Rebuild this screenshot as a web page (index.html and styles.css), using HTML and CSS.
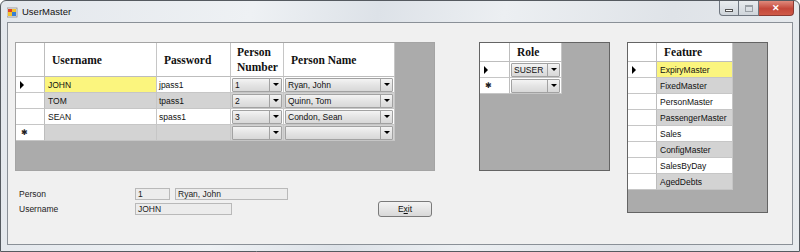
FILE: index.html
```html
<!DOCTYPE html>
<html lang="en">
<head>
    <meta charset="UTF-8" />
    <title>UserMaster</title>
    <link rel="stylesheet" href="styles.css">
</head>
<body>
    <div class="window">
        <div class="titlebar">
            <svg class="app-icon" width="11" height="11" viewBox="0 0 11 11">
                <rect x="0" y="1" width="10" height="9" fill="#f4f4f4" stroke="#8a8a8a" stroke-width="0.8"/>
                <rect x="1" y="2" width="4" height="3" fill="#e0412a"/>
                <rect x="5" y="2" width="4" height="3" fill="#f2c22c"/>
                <rect x="1" y="5" width="4" height="4" fill="#f2c22c"/>
                <rect x="5" y="5" width="4" height="4" fill="#3a7fd4"/>
            </svg>
            <span class="title">UserMaster</span>
            <div class="caption">
                <span class="cbtn min"><i></i></span>
                <span class="cbtn max"><i></i></span>
                <span class="cbtn close">&#10005;</span>
            </div>
        </div>
        <div class="client">
            <div class="left">
                <div class="top">
                    <div class="grid main">
                        <div class="row hdr">
                            <div class="c rh"></div>
                            <div class="c w-user">Username</div>
                            <div class="c w-pass">Password</div>
                            <div class="c w-pnum two">Person<br>Number</div>
                            <div class="c w-pname">Person Name</div>
                        </div>
                        <div class="row">
                            <div class="c rh"><span class="cur"></span></div>
                            <div class="c w-user yellow">JOHN</div>
                            <div class="c w-pass">jpass1</div>
                            <div class="c w-pnum box"><div class="combo"><span>1</span><b><i></i></b></div></div>
                            <div class="c w-pname box"><div class="combo"><span>Ryan, John</span><b><i></i></b></div></div>
                        </div>
                        <div class="row alt">
                            <div class="c rh"></div>
                            <div class="c w-user">TOM</div>
                            <div class="c w-pass">tpass1</div>
                            <div class="c w-pnum box"><div class="combo"><span>2</span><b><i></i></b></div></div>
                            <div class="c w-pname box"><div class="combo"><span>Quinn, Tom</span><b><i></i></b></div></div>
                        </div>
                        <div class="row">
                            <div class="c rh"></div>
                            <div class="c w-user">SEAN</div>
                            <div class="c w-pass">spass1</div>
                            <div class="c w-pnum box"><div class="combo"><span>3</span><b><i></i></b></div></div>
                            <div class="c w-pname box"><div class="combo"><span>Condon, Sean</span><b><i></i></b></div></div>
                        </div>
                        <div class="row alt">
                            <div class="c rh"><span class="star">&#10033;</span></div>
                            <div class="c w-user"></div>
                            <div class="c w-pass"></div>
                            <div class="c w-pnum box"><div class="combo"><span></span><b><i></i></b></div></div>
                            <div class="c w-pname box"><div class="combo"><span></span><b><i></i></b></div></div>
                        </div>
                    </div>

                    <div class="grid role">
                        <div class="row hdr small">
                            <div class="c rh2"></div>
                            <div class="c w-role">Role</div>
                        </div>
                        <div class="row">
                            <div class="c rh2"><span class="cur"></span></div>
                            <div class="c w-role box"><div class="combo"><span>SUSER</span><b><i></i></b></div></div>
                        </div>
                        <div class="row">
                            <div class="c rh2"><span class="star">&#10033;</span></div>
                            <div class="c w-role box"><div class="combo"><span></span><b><i></i></b></div></div>
                        </div>
                    </div>
                </div>

                <div class="form">
                    <div class="fields">
                        <span class="lbl">Person</span>
                        <div class="boxes">
                            <span class="tb tb-num">1</span>
                            <span class="tb tb-name">Ryan, John</span>
                        </div>
                        <span class="lbl">Username</span>
                        <div class="boxes">
                            <span class="tb tb-user">JOHN</span>
                        </div>
                    </div>
                    <button class="exit">E<u>x</u>it</button>
                </div>
            </div>

            <div class="grid feature">
                <div class="row hdr small">
                    <div class="c rh"></div>
                    <div class="c w-feat">Feature</div>
                </div>
                <div class="row"><div class="c rh"><span class="cur"></span></div><div class="c w-feat yellow">ExpiryMaster</div></div>
                <div class="row alt"><div class="c rh"></div><div class="c w-feat">FixedMaster</div></div>
                <div class="row"><div class="c rh"></div><div class="c w-feat">PersonMaster</div></div>
                <div class="row alt"><div class="c rh"></div><div class="c w-feat">PassengerMaster</div></div>
                <div class="row"><div class="c rh"></div><div class="c w-feat">Sales</div></div>
                <div class="row alt"><div class="c rh"></div><div class="c w-feat">ConfigMaster</div></div>
                <div class="row"><div class="c rh"></div><div class="c w-feat">SalesByDay</div></div>
                <div class="row alt"><div class="c rh"></div><div class="c w-feat">AgedDebts</div></div>
            </div>
        </div>
    </div>
</body>
</html>
```

FILE: styles.css
```css
html, body {
    margin: 0;
    padding: 0;
    background: #ffffff;
}
* {
    box-sizing: border-box;
}
.window {
    width: 800px;
    height: 252px;
    border: 1px solid #555a60;
    border-radius: 6px 6px 0 0;
    background: linear-gradient(100deg, #e3e7ec 0%, #eef1f4 30%, #dde2e8 45%, #eceff2 60%, #dfe3e8 80%, #e8ebee 100%);
    display: flex;
    flex-direction: column;
    font-family: "Liberation Sans", Arial, sans-serif;
}
.titlebar {
    height: 21px;
    display: flex;
    align-items: flex-start;
    padding-left: 6px;
    padding-right: 5px;
}
.app-icon {
    margin-top: 6px;
}
.title {
    margin-left: 4px;
    margin-top: 5px;
    font-size: 9.5px;
    color: #111;
}
.caption {
    margin-left: auto;
    display: flex;
    height: 15px;
}
.cbtn {
    display: flex;
    align-items: center;
    justify-content: center;
    height: 15px;
    border: 1px solid #6f7680;
    border-top: none;
    background: linear-gradient(#e9ecef, #cfd5db);
}
.cbtn.min {
    width: 20px;
    border-radius: 0 0 0 4px;
}
.cbtn.min i {
    display: block;
    width: 8px;
    height: 3px;
    margin-top: 4px;
    background: #fff;
    border: 1px solid #555;
}
.cbtn.max {
    width: 20px;
    border-left: none;
}
.cbtn.max i {
    display: block;
    width: 8px;
    height: 7px;
    border: 1px solid #9aa0a6;
    border-top-width: 2px;
}
.cbtn.close {
    width: 35px;
    border-left: none;
    border-color: #8a3a33;
    border-radius: 0 0 4px 0;
    background: linear-gradient(#e08a7c, #c4473a 55%, #cf5a48);
    color: #fff;
    font-size: 9px;
    font-weight: bold;
}
.client {
    flex: 1;
    margin: 0 6px 6px 6px;
    border: 1px solid #8a9097;
    background: #f0f0f0;
    padding: 19px 0 0 7px;
    display: flex;
    align-items: flex-start;
}
.left {
    width: 595px;
}
.top {
    display: flex;
    align-items: flex-start;
}

/* data grids */
.grid {
    background: #ababab;
    font-size: 8.5px;
}
.grid.main {
    width: 420px;
    height: 129px;
    border: 1px solid #a4a4a4;
}
.grid.role {
    width: 131px;
    height: 129px;
    margin-left: 44px;
    border: 1px solid #646464;
}
.grid.feature {
    width: 141px;
    height: 171px;
    margin-left: 17px;
    border: 1px solid #646464;
}
.row {
    display: flex;
    height: 16px;
    background: #ffffff;
    width: fit-content;
}
.row.alt {
    background: #d3d3d3;
}
.row.hdr {
    height: 34px;
    background: #ffffff;
}
.row.hdr.small {
    height: 19px;
}
.c {
    height: 100%;
    border-right: 1px solid #c6c6c6;
    border-bottom: 1px solid #c6c6c6;
    display: flex;
    align-items: center;
    padding-left: 3px;
    white-space: nowrap;
    overflow: hidden;
    color: #111;
}
.hdr .c {
    font-family: "Liberation Serif", "Times New Roman", serif;
    font-weight: bold;
    font-size: 11.5px;
    padding-left: 7px;
    border-bottom-color: #bdbdbd;
}
.hdr .c.two {
    line-height: 15px;
    padding-left: 6px;
}
.c.rh, .c.rh2 {
    background: #ffffff;
    border-right-color: #bdbdbd;
    padding-left: 4px;
}
.c.rh { width: 29px; }
.c.rh2 { width: 30px; }
.w-user { width: 112px; }
.w-pass { width: 74px; padding-left: 2px; }
.w-pnum { width: 53px; }
.w-pname { width: 111px; }
.w-role { width: 52px; }
.w-feat { width: 76px; padding-left: 3px; }
.c.yellow {
    background: #fbf57e;
}
.cur {
    display: block;
    width: 0;
    height: 0;
    border-left: 4px solid #000;
    border-top: 4px solid transparent;
    border-bottom: 4px solid transparent;
}
.star {
    font-size: 8px;
    color: #222;
    margin-left: 1px;
}
.c.box {
    padding: 0 1px 0 1px;
    background: transparent;
}
.combo {
    display: flex;
    width: 100%;
    height: 14px;
    border: 1px solid #a2a2a2;
    border-radius: 1px;
    background: linear-gradient(#f4f4f4, #e4e4e4 50%, #d8d8d8);
}
.combo span {
    flex: 1;
    padding-left: 2px;
    line-height: 12px;
    overflow: hidden;
}
.combo b {
    width: 12px;
    border-left: 1px solid #a2a2a2;
    display: flex;
    align-items: center;
    justify-content: center;
}
.combo b i {
    display: block;
    width: 0;
    height: 0;
    border-left: 3px solid transparent;
    border-right: 3px solid transparent;
    border-top: 3px solid #000;
}

/* bottom form */
.form {
    display: flex;
    align-items: flex-start;
    padding-top: 17px;
    padding-left: 4px;
}
.fields {
    display: grid;
    grid-template-columns: 116px auto;
    row-gap: 3px;
    font-size: 8.5px;
    color: #222;
}
.lbl {
    display: flex;
    align-items: center;
    height: 12px;
}
.boxes {
    display: flex;
    gap: 5px;
}
.tb {
    display: flex;
    align-items: center;
    height: 12px;
    padding-left: 2px;
    border: 1px solid #b9b9b9;
    background: #ececec;
    color: #222;
}
.tb-num { width: 35px; }
.tb-name { width: 113px; }
.tb-user { width: 97px; }
.exit {
    margin-left: 90px;
    margin-top: 13px;
    width: 54px;
    height: 16px;
    padding: 0;
    border: 1px solid #7a7a7a;
    border-radius: 3px;
    background: linear-gradient(#f3f3f3, #e6e6e6 50%, #d8d8d8);
    font-family: "Liberation Sans", Arial, sans-serif;
    font-size: 8.5px;
    color: #111;
}
```
